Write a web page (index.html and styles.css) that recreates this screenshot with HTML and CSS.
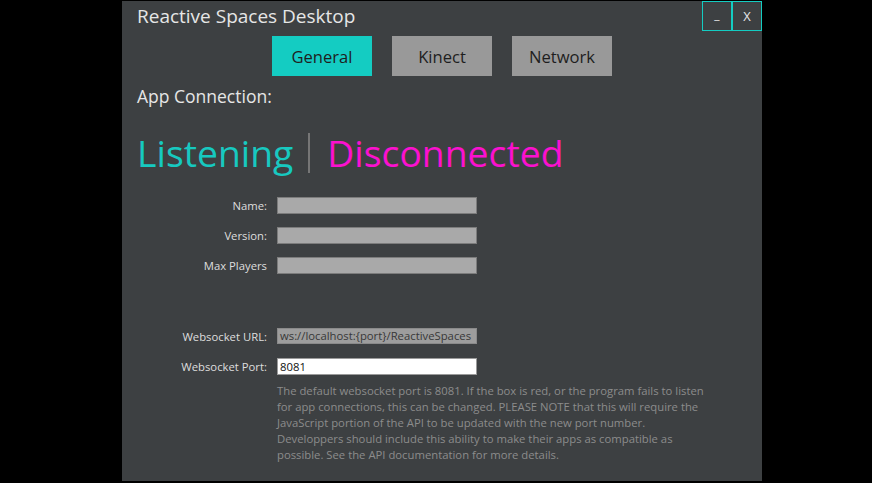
FILE: index.html
```html
<!DOCTYPE html>
<html>
<head>
<meta charset="utf-8">
<link rel="stylesheet" href="styles.css">
</head>
<body>
<div class="window">
  <div class="titlebar">
    <div class="title">Reactive Spaces Desktop</div>
    <div class="controls">
      <div class="ctrl ctrl-min">_</div>
      <div class="ctrl ctrl-close">X</div>
    </div>
  </div>
  <div class="tabs">
    <div class="tab active">General</div>
    <div class="tab">Kinect</div>
    <div class="tab">Network</div>
  </div>
  <div class="section-label">App Connection:</div>
  <div class="status">
    <span class="listening">Listening</span>
    <span class="divider"></span>
    <span class="disconnected">Disconnected</span>
  </div>
  <div class="form">
    <div class="label">Name:</div>
    <div class="field"></div>
    <div class="label">Version:</div>
    <div class="field"></div>
    <div class="label">Max Players</div>
    <div class="field"></div>
  </div>
  <div class="form form-ws">
    <div class="label">Websocket URL:</div>
    <div class="field field-url">ws://localhost:{port}/ReactiveSpaces</div>
    <div class="label">Websocket Port:</div>
    <div class="field field-port">8081</div>
  </div>
  <div class="help">The default websocket port is 8081. If the box is red, or the program fails to listen<br>for app connections, this can be changed. PLEASE NOTE that this will require the<br>JavaScript portion of the API to be updated with the new port number.<br>Developpers should include this ability to make their apps as compatible as<br>possible. See the API documentation for more details.</div>
</div>
</body>
</html>
```

FILE: styles.css
```css
html, body {
  margin: 0;
  padding: 0;
  background: #000;
}
body {
  font-family: "Open Sans", "Noto Sans", sans-serif;
}
.window {
  width: 640px;
  height: 480px;
  margin: 1px 0 0 122px;
  background: #3d4042;
  display: flex;
  flex-direction: column;
}
.titlebar {
  height: 30px;
  display: flex;
  justify-content: space-between;
  align-items: flex-start;
}
.title {
  padding-left: 15px;
  line-height: 30px;
  font-size: 19px;
  color: #e6e6e6;
}
.controls {
  display: flex;
}
.ctrl {
  width: 30px;
  height: 30px;
  box-sizing: border-box;
  border: 1px solid #14ccc2;
  color: #e6e6e6;
  font-size: 13px;
  display: flex;
  align-items: center;
  justify-content: center;
}
.ctrl-min {
  font-size: 12px;
  padding-bottom: 4px;
}
.tabs {
  margin-top: 5px;
  display: flex;
  justify-content: center;
  gap: 20px;
}
.tab {
  width: 100px;
  height: 40px;
  background: #999999;
  color: #1e1e1e;
  font-size: 16.6px;
  display: flex;
  align-items: center;
  justify-content: center;
}
.tab.active {
  background: #14ccc2;
}
.section-label {
  margin-top: 8px;
  padding-left: 15px;
  line-height: 24px;
  font-size: 17.5px;
  color: #e6e6e6;
}
.status {
  margin-top: 20px;
  padding-left: 15px;
  height: 50px;
  display: flex;
  align-items: center;
  font-size: 37.3px;
  line-height: 50px;
}
.listening {
  color: #17c9c0;
}
.divider {
  width: 2px;
  height: 40px;
  background: #767676;
  margin: 0 17px 0 15px;
}
.disconnected {
  color: #fb11cf;
}
.form {
  margin-top: 19px;
  display: grid;
  grid-template-columns: 145px 200px;
  column-gap: 10px;
  row-gap: 13px;
  font-size: 11.3px;
}
.form-ws {
  margin-top: 54px;
  row-gap: 13px;
}
.label {
  text-align: right;
  color: #dedede;
  line-height: 17px;
  height: 17px;
}
.field {
  height: 17px;
  box-sizing: border-box;
  background: #a9a9a9;
  border: 1px solid #7c7c7c;
  line-height: 15px;
  padding-left: 2px;
  white-space: nowrap;
  overflow: hidden;
}
.field-url {
  height: 16px;
  line-height: 14px;
  background: #9d9d9d;
  border-color: #8a8a8a;
  color: #383838;
}
.field-port {
  background: #ffffff;
  border-color: #9a9a9a;
  color: #111;
}
.help {
  margin-top: 8px;
  padding-left: 155px;
  font-size: 11.3px;
  line-height: 16px;
  color: #8c8c8c;
  white-space: nowrap;
}
```
